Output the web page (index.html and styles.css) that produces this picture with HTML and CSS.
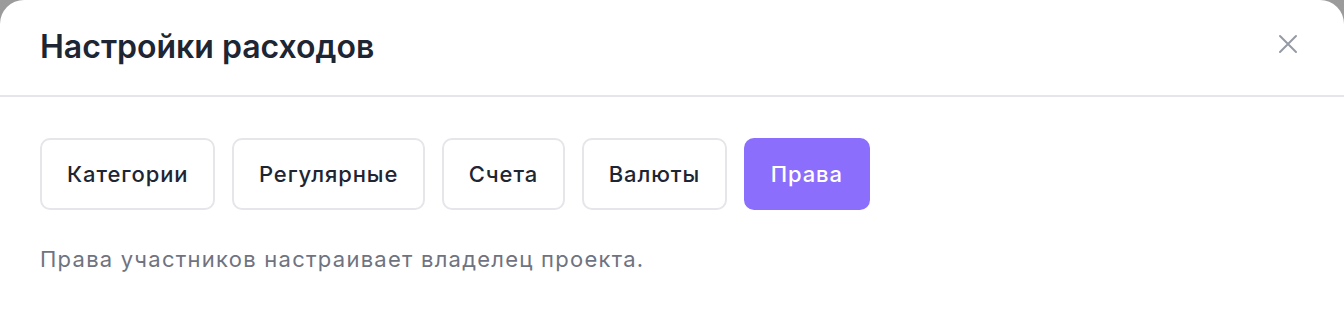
FILE: index.html
```html
<!DOCTYPE html>
<html lang="ru">
<head>
<meta charset="utf-8">
<title>Настройки расходов</title>
<link rel="stylesheet" href="styles.css">
</head>
<body>
<div class="modal">
  <header class="modal-header">
    <h2 class="modal-title">Настройки расходов</h2>
    <button class="close-btn" aria-label="Закрыть">
      <svg width="20" height="20" viewBox="0 0 20 20" fill="none" stroke="currentColor" stroke-width="2" stroke-linecap="round"><path d="M2 2L18 18M18 2L2 18"/></svg>
    </button>
  </header>
  <div class="modal-body">
    <nav class="tabs">
      <button class="tab">Категории</button>
      <button class="tab">Регулярные</button>
      <button class="tab">Счета</button>
      <button class="tab">Валюты</button>
      <button class="tab active">Права</button>
    </nav>
    <p class="note">Права участников настраивает владелец проекта.</p>
  </div>
</div>
</body>
</html>
```
FILE: styles.css
```css
* { box-sizing: border-box; }
html, body { margin: 0; padding: 0; height: 100%; }
body {
  background: #9b9b9b;
  font-family: Inter, "Noto Sans", sans-serif;
}
.modal {
  background: #fff;
  border-radius: 24px 24px 0 0;
  min-height: 100%;
}
.modal-header {
  display: flex;
  align-items: center;
  justify-content: space-between;
  height: 97px;
  padding: 0 46px 2px 40px;
  border-bottom: 2px solid #e6e6ea;
}
.modal-title {
  margin: 0;
  font-size: 32px;
  font-weight: 600;
  color: #1e2533;
}
.close-btn {
  background: none;
  border: 0;
  padding: 0;
  color: #959aa5;
  display: flex;
  margin-bottom: 6px;
}
.modal-body {
  padding: 41px 40px 0;
}
.tabs {
  display: flex;
  gap: 16.5px;
}
.tab {
  font-family: inherit;
  font-size: 22px;
  font-weight: 500;
  letter-spacing: 0.9px;
  color: #1e2533;
  background: #fff;
  border: 2px solid #e6e6ea;
  border-radius: 10px;
  height: 72px;
  padding: 0 25px;
}
.tab.active {
  background: #8b6ffc;
  border-color: #8b6ffc;
  color: #fff;
}
.note {
  margin: 36px 0 0;
  font-size: 22px;
  letter-spacing: 1.25px;
  color: #6f7380;
}
```
